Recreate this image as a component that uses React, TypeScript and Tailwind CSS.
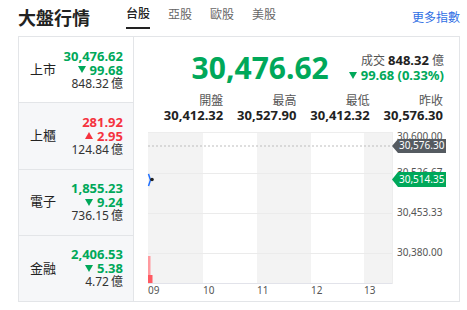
const rows = [
  { name: "上市", value: "30,476.62", change: "99.68", amount: "848.32", up: false, active: true },
  { name: "上櫃", value: "281.92", change: "2.95", amount: "124.84", up: true, active: false },
  { name: "電子", value: "1,855.23", change: "9.24", amount: "736.15", up: false, active: false },
  { name: "金融", value: "2,406.53", change: "5.38", amount: "4.72", up: false, active: false },
];

const stats = [
  { label: "開盤", value: "30,412.32" },
  { label: "最高", value: "30,527.90" },
  { label: "最低", value: "30,412.32" },
  { label: "昨收", value: "30,576.30" },
];

function Arrow({ up }: { up: boolean }) {
  return (
    <svg width="8" height="7" viewBox="0 0 8 7" className="mr-[4px]">
      {up ? <polygon points="4,0 8,7 0,7" fill="#f5333f" /> : <polygon points="0,0 8,0 4,7" fill="#00a85a" />}
    </svg>
  );
}

function Chart() {
  const bands = [
    [148, 203],
    [257, 311],
    [364, 392],
  ];
  return (
    <svg width="325" height="178" viewBox="134 123 325 178" className="block">
      {bands.map(([a, b]) => (
        <rect key={a} x={a} y={132} width={b - a} height={151} fill="#f3f3f3" />
      ))}
      <line x1={148} y1={132.5} x2={392} y2={132.5} stroke="#ededed" />
      {[173, 213, 253].map((y) => (
        <line key={y} x1={148} y1={y + 0.5} x2={392} y2={y + 0.5} stroke="#ebebeb" />
      ))}
      <line x1={148} y1={283.5} x2={392} y2={283.5} stroke="#e2e3ea" />
      <line x1={392.5} y1={132} x2={392.5} y2={284} stroke="#ededed" />
      <line x1={148} y1={146} x2={392} y2={146} stroke="#bdbdbd" strokeDasharray="2 2" />

      {/* volume */}
      <rect x={148} y={256} width={2.5} height={27} fill="#ff9a9f" />
      <rect x={148} y={275} width={4.5} height={8} fill="#ff5a62" />

      {/* price */}
      <path d="M148.5 174 L150.5 180 L148.5 186" stroke="#1f6fff" strokeWidth="1.5" fill="none" />
      <circle cx={152} cy={179.5} r={1.8} fill="#222" />

      <g fontFamily="'Noto Sans', 'Open Sans', sans-serif" fontSize="10" fill="#555">
        <text x={397} y={137} dominantBaseline="middle">30,600.00</text>
        <text x={397} y={173} dominantBaseline="middle">30,526.67</text>
        <text x={397} y={213.5} dominantBaseline="middle">30,453.33</text>
        <text x={397} y={253.5} dominantBaseline="middle">30,380.00</text>
        {[
          ["09", 148],
          ["10", 203],
          ["11", 257],
          ["12", 311],
          ["13", 364],
        ].map(([t, x]) => (
          <text key={t} x={x} y={291} dominantBaseline="middle">
            {t}
          </text>
        ))}
      </g>

      <polygon points="392,146 398,139 446,139 446,153 398,153" fill="#555b61" />
      <text x={399} y={146.5} dominantBaseline="middle" fontSize="10" fill="#fff" fontFamily="'Noto Sans', sans-serif">
        30,576.30
      </text>
      <polygon points="392,179.5 398,172 446,172 446,187 398,187" fill="#00a85a" />
      <text x={399} y={180} dominantBaseline="middle" fontSize="10" fill="#fff" fontFamily="'Noto Sans', sans-serif">
        30,514.35
      </text>
    </svg>
  );
}

export default function App() {
  return (
    <div
      className="w-[467px] h-[310px] bg-white pl-[18px] pr-[7px] text-[#222]"
      style={{ fontFamily: "'Noto Sans', 'Noto Sans CJK TC', sans-serif" }}
    >
      <div className="h-[36px] flex items-center">
        <h1 className="text-[18px] font-bold leading-none w-[108px]">大盤行情</h1>
        <div className="flex gap-[18px] text-[12px] h-full">
          {["台股", "亞股", "歐股", "美股"].map((t, i) => (
            <div
              key={t}
              className={
                i === 0
                  ? "flex items-center h-[29px] border-b-2 border-[#222] text-[#222] font-medium pt-[1px]"
                  : "flex items-center h-[29px] text-[#666] pt-[1px]"
              }
            >
              {t}
            </div>
          ))}
        </div>
        <a className="ml-auto text-[12px] text-[#2f6fe4]">更多指數</a>
      </div>

      <div className="h-[266px] border border-[#e3e5e8] flex">
        <div className="w-[115px] border-r border-[#e3e5e8] flex flex-col">
          {rows.map((r, i) => (
            <div
              key={r.name}
              className={
                (r.active ? "bg-white" : "bg-[#f6f7f9]") +
                (i < rows.length - 1 ? " border-b border-[#e3e5e8]" : "") +
                " flex-1 flex items-center pl-[11px] pr-[10px]"
              }
            >
              <div className="text-[13px]">{r.name}</div>
              <div className="ml-auto flex flex-col items-end leading-[14px]">
                <div className={(r.up ? "text-[#f5333f]" : "text-[#00a85a]") + " text-[13px] font-bold"}>{r.value}</div>
                <div className={(r.up ? "text-[#f5333f]" : "text-[#00a85a]") + " text-[13px] font-bold flex items-center"}>
                  <Arrow up={r.up} />
                  {r.change}
                </div>
                <div className="text-[12px] text-[#333]">
                  {r.amount}
                  <span className="ml-[2px]">億</span>
                </div>
              </div>
            </div>
          ))}
        </div>

        <div className="flex-1 flex flex-col">
          <div className="h-[56px] pt-[6px] flex items-center justify-end pr-[15px] gap-[20px]">
            <div className="text-[30px] font-bold text-[#00a85a] leading-none">30,476.62</div>
            <div className="flex flex-col items-end leading-[15px]">
              <div className="text-[12px] text-[#555]">
                成交 <span className="text-[13px] font-bold text-[#222]">848.32</span> 億
              </div>
              <div className="text-[13px] font-bold text-[#00a85a] flex items-center">
                <Arrow up={false} />
                99.68 (0.33%)
              </div>
            </div>
          </div>
          <div className="h-[30px] pr-[16px] flex justify-end">
            <div className="grid grid-cols-4 w-[293px]">
              {stats.map((s) => (
                <div key={s.label} className="flex flex-col items-end">
                  <div className="text-[12px] text-[#555] leading-[15px]">{s.label}</div>
                  <div className="text-[13px] font-bold leading-[15px]">{s.value}</div>
                </div>
              ))}
            </div>
          </div>
          <Chart />
        </div>
      </div>
    </div>
  );
}
